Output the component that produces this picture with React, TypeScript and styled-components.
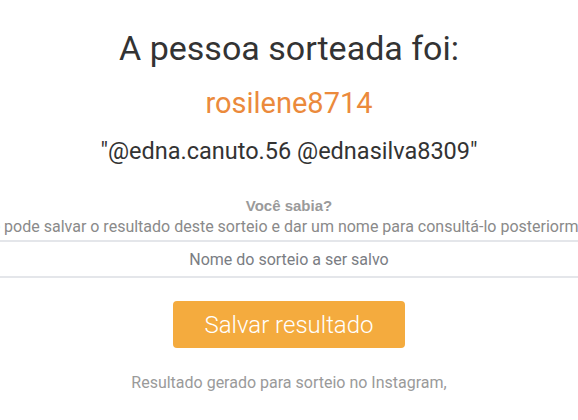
import styled, { createGlobalStyle } from "styled-components";

const GlobalStyle = createGlobalStyle`
  html, body {
    margin: 0;
    padding: 0;
    background: #ffffff;
    font-family: Roboto, "Liberation Sans", Arial, sans-serif;
  }
`;

const Page = styled.div`
  width: 578px;
  height: 420px;
  overflow: hidden;
`;

const Content = styled.div`
  width: 578px;
  padding-top: 28px;
  display: flex;
  flex-direction: column;
  align-items: center;
  text-align: center;
`;

const Title = styled.h1`
  margin: 0;
  font-size: 34px;
  line-height: 40px;
  font-weight: 400;
  color: #333333;
  white-space: nowrap;
`;

const Winner = styled.div`
  margin-top: 18px;
  font-size: 29px;
  line-height: 34px;
  color: #eb8a3c;
  white-space: nowrap;
`;

const Comment = styled.div`
  margin-top: 17px;
  font-size: 23.5px;
  line-height: 28px;
  color: #333333;
  white-space: nowrap;
`;

const TipTitle = styled.div`
  margin-top: 32px;
  font-family: "Liberation Sans", Arial, sans-serif;
  font-size: 15px;
  line-height: 18px;
  font-weight: 700;
  color: #9a9a9a;
`;

const TipText = styled.div`
  margin-top: 2px;
  font-size: 16px;
  line-height: 20px;
  color: #8a8a8a;
  white-space: nowrap;
`;

const NameInput = styled.input`
  margin-top: 3px;
  box-sizing: border-box;
  width: 700px;
  flex-shrink: 0;
  height: 38px;
  border: none;
  border-top: 2px solid #e4e6ea;
  border-bottom: 2px solid #e4e6ea;
  background: #ffffff;
  text-align: center;
  font-family: inherit;
  font-size: 16px;
  color: #555555;
  outline: none;

  &::placeholder {
    color: #7a7d83;
  }
`;

const SaveButton = styled.button`
  margin-top: 23px;
  width: 232px;
  height: 47px;
  border: none;
  border-radius: 4px;
  background: #f4ab3e;
  color: #ffffff;
  font-family: inherit;
  font-size: 24px;
  font-weight: 300;
  cursor: pointer;
`;

const Footer = styled.p`
  margin: 25px 0 0;
  font-size: 16px;
  line-height: 20px;
  color: #9a9a9a;
  white-space: nowrap;
`;

export default function App() {
  return (
    <Page>
      <GlobalStyle />
      <Content>
        <Title>A pessoa sorteada foi:</Title>
        <Winner>rosilene8714</Winner>
        <Comment>"@edna.canuto.56 @ednasilva8309"</Comment>
        <TipTitle>Você sabia?</TipTitle>
        <TipText>
          Você pode salvar o resultado deste sorteio e dar um nome para consultá-lo posteriormente.
        </TipText>
        <NameInput placeholder="Nome do sorteio a ser salvo" />
        <SaveButton>Salvar resultado</SaveButton>
        <Footer>Resultado gerado para sorteio no Instagram,</Footer>
      </Content>
    </Page>
  );
}
